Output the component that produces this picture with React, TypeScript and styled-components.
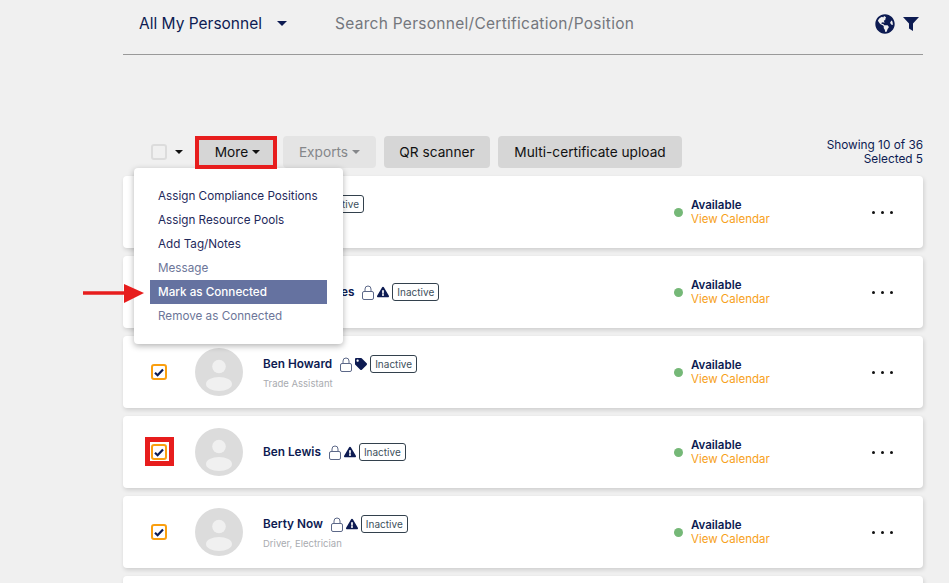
import React from "react";
import styled, { createGlobalStyle } from "styled-components";
import { FaExclamationTriangle, FaGlobeAmericas, FaTag } from "react-icons/fa";

const navy = "#0d1b52";

const GlobalStyle = createGlobalStyle`
  html, body {
    margin: 0;
    height: 583px;
    overflow: hidden;
    background: #f0f0f0;
    font-family: Inter, "Noto Sans", "Liberation Sans", sans-serif;
  }
  * { box-sizing: border-box; }
`;

const Page = styled.div`
  position: relative;
  width: 949px;
  height: 583px;
  overflow: hidden;
  padding: 0 26px 0 123px;
`;

const Header = styled.div`
  display: flex;
  align-items: center;
  height: 55px;
  padding: 0 4px 7px 16px;
  border-bottom: 1px solid #999;
`;

const ScopeLabel = styled.span`
  font-size: 15.5px;
  color: ${navy};
`;

const Caret = styled.span<{ $size?: number; $color?: string; $ml?: number }>`
  display: inline-block;
  width: 0;
  height: 0;
  margin-left: ${(p) => p.$ml ?? 4}px;
  border-left: ${(p) => p.$size ?? 4}px solid transparent;
  border-right: ${(p) => p.$size ?? 4}px solid transparent;
  border-top: ${(p) => p.$size ?? 4}px solid ${(p) => p.$color ?? "#111"};
`;

const SearchText = styled.span`
  margin-left: 48px;
  flex: 1;
  font-size: 15.5px;
  letter-spacing: 0.28px;
  color: #74777d;
`;

const HeaderIcons = styled.div`
  display: flex;
  align-items: center;
  gap: 8px;
  color: ${navy};
`;

const Toolbar = styled.div`
  display: flex;
  align-items: center;
  margin-top: 81px;
  height: 32px;
  padding-left: 28px;
`;

const SelectAll = styled.span`
  width: 16px;
  height: 16px;
  border: 2px solid #dcdcdc;
  border-radius: 3px;
`;

const ToolButton = styled.div<{ $disabled?: boolean; $w: number }>`
  display: flex;
  align-items: center;
  justify-content: center;
  width: ${(p) => p.$w}px;
  height: 32px;
  margin-right: 8px;
  border-radius: 4px;
  font-size: 13.7px;
  background: ${(p) => (p.$disabled ? "#e4e4e4" : "#d6d6d6")};
  color: ${(p) => (p.$disabled ? "#85878a" : "#111")};
`;

const MoreButton = styled(ToolButton)`
  margin-left: 14px;
  padding-left: 3px;
`;

const Counts = styled.div`
  margin-left: auto;
  align-self: flex-start;
  text-align: right;
  font-size: 11.8px;
  line-height: 14px;
  margin-top: 2px;
  color: ${navy};
`;

const List = styled.div`
  display: flex;
  flex-direction: column;
  gap: 8px;
  margin-top: 8px;
`;

const Card = styled.div`
  display: flex;
  align-items: center;
  flex: none;
  height: 72px;
  background: #fff;
  border-radius: 4px;
  box-shadow: 1px 2px 4px rgba(0, 0, 0, 0.14);
  padding-left: 28px;
`;

const Check = styled.span`
  display: flex;
  align-items: center;
  justify-content: center;
  width: 16px;
  height: 16px;
  border: 2px solid #fa9f0f;
  border-radius: 3px;
  background: #fff;
`;

const Avatar = styled.svg`
  width: 48px;
  height: 48px;
  margin-left: 28px;
  flex: none;
`;

const Info = styled.div`
  width: 411px;
  margin-left: 20px;
`;

const NameRow = styled.div`
  display: flex;
  align-items: center;
  gap: 3px;
`;

const Name = styled.span`
  font-size: 11.8px;
  font-weight: 600;
  color: ${navy};
  margin-right: 5px;
`;

const Tag = styled.span`
  height: 18px;
  line-height: 16px;
  padding: 0 4px;
  font-size: 10px;
  color: #40505c;
  border: 1px solid #33414d;
  border-radius: 3px;
`;

const Role = styled.div`
  margin-top: 5px;
  font-size: 9.5px;
  color: #a9abb0;
`;

const Dot = styled.span`
  width: 9px;
  height: 9px;
  border-radius: 50%;
  background: #75b877;
  flex: none;
`;

const Status = styled.div`
  margin-left: 8px;
  width: 181px;
  font-size: 11.5px;
  line-height: 14px;
`;

const Available = styled.div`
  font-weight: 600;
  color: ${navy};
`;

const CalendarLink = styled.div`
  color: #f7a11a;
`;

const Dots = styled.div`
  display: flex;
  gap: 6px;
`;

const DotMark = styled.span`
  width: 3px;
  height: 3px;
  border-radius: 50%;
  background: #111;
`;

const Menu = styled.div`
  position: absolute;
  left: 134px;
  top: 168px;
  width: 209px;
  padding: 16px;
  background: #fff;
  border-radius: 4px;
  box-shadow: 0 2px 6px rgba(0, 0, 0, 0.3);
`;

const MenuItem = styled.div<{ $muted?: boolean; $active?: boolean }>`
  height: 24px;
  line-height: 24px;
  padding-left: 8px;
  font-size: 11.7px;
  white-space: nowrap;
  font-weight: ${(p) => (p.$active ? 500 : 400)};
  background: ${(p) => (p.$active ? "#6572a0" : "transparent")};
  color: ${(p) => (p.$active ? "#fff" : p.$muted ? "#6d7699" : "#1f2a5c")};
`;

const Highlight = styled.div<{ $x: number; $y: number; $w: number; $h: number; $b: number }>`
  position: absolute;
  left: ${(p) => p.$x}px;
  top: ${(p) => p.$y}px;
  width: ${(p) => p.$w}px;
  height: ${(p) => p.$h}px;
  border: ${(p) => p.$b}px solid #e71d1d;
`;

const ArrowMark = styled.svg`
  position: absolute;
  left: 83px;
  top: 283px;
`;

const Lock = () => (
  <svg width="12" height="15" viewBox="0 0 12 15" fill="none" stroke="#5c6888" strokeWidth="1">
    <rect x="0.500" y="6.500" width="11" height="8" rx="1.500" />
    <path d="M3 6.500V4a3 3 0 0 1 6 0v2.500" />
  </svg>
);

const Tick = () => (
  <svg width="10" height="9" viewBox="0 0 10 9" fill="none" stroke={navy} strokeWidth="2.2">
    <path d="M1 4.800 3.600 7.200 9 1.500" />
  </svg>
);

const Funnel = () => (
  <svg width="16" height="14" viewBox="0 0 16 14" fill={navy}>
    <path d="M0 0H16L10 6.500V14L6 11.500V6.500Z" />
  </svg>
);

const Person = () => (
  <Avatar viewBox="0 0 48 48">
    <circle cx="24" cy="24" r="24" fill="#dcdcdc" />
    <circle cx="24" cy="18.500" r="6.800" fill="#f0f0f0" />
    <ellipse cx="24" cy="36" rx="13" ry="7" fill="#f0f0f0" />
  </Avatar>
);

type Row = { name: string; role?: string; icon?: "warn" | "tag" };

const rows: Row[] = [
  // the start of this row sits behind the open menu
  { name: "Ada Lee", role: "Driver, Electrician" },
  { name: "Andrew Charles", icon: "warn" },
  { name: "Ben Howard", role: "Trade Assistant", icon: "tag" },
  { name: "Ben Lewis", icon: "warn" },
  { name: "Berty Now", role: "Driver, Electrician", icon: "warn" },
  { name: "Bob Taylor", role: "Driver", icon: "warn" },
];

const menuItems = [
  { label: "Assign Compliance Positions" },
  { label: "Assign Resource Pools" },
  { label: "Add Tag/Notes" },
  { label: "Message", muted: true },
  { label: "Mark as Connected", active: true },
  { label: "Remove as Connected", muted: true },
];

export default function App() {
  return (
    <Page>
      <GlobalStyle />
      <Header>
        <ScopeLabel>All My Personnel</ScopeLabel>
        <Caret $size={5} $color={navy} $ml={15} />
        <SearchText>Search Personnel/Certification/Position</SearchText>
        <HeaderIcons>
          <FaGlobeAmericas size={20} />
          <Funnel />
        </HeaderIcons>
      </Header>

      <Toolbar>
        <SelectAll />
        <Caret $ml={8} />
        <MoreButton $w={78}>
          More
          <Caret />
        </MoreButton>
        <ToolButton $disabled $w={93}>
          Exports
          <Caret $color="#85878a" />
        </ToolButton>
        <ToolButton $w={106}>QR scanner</ToolButton>
        <ToolButton $w={184}>Multi-certificate upload</ToolButton>
        <Counts>
          Showing 10 of 36
          <br />
          Selected 5
        </Counts>
      </Toolbar>

      <List>
        {rows.map((row) => (
          <Card key={row.name}>
            <Check>
              <Tick />
            </Check>
            <Person />
            <Info>
              <NameRow>
                <Name>{row.name}</Name>
                {row.icon && <Lock />}
                {row.icon === "warn" && <FaExclamationTriangle size={12} color={navy} />}
                {row.icon === "tag" && <FaTag size={12} color={navy} />}
                <Tag>Inactive</Tag>
              </NameRow>
              {row.role && <Role>{row.role}</Role>}
            </Info>
            <Dot />
            <Status>
              <Available>Available</Available>
              <CalendarLink>View Calendar</CalendarLink>
            </Status>
            <Dots>
              <DotMark />
              <DotMark />
              <DotMark />
            </Dots>
          </Card>
        ))}
      </List>

      <Menu>
        {menuItems.map((item) => (
          <MenuItem key={item.label} $muted={item.muted} $active={item.active}>
            {item.label}
          </MenuItem>
        ))}
      </Menu>

      <Highlight $x={195} $y={136} $w={82} $h={33} $b={4} />
      <Highlight $x={145} $y={437} $w={29} $h={29} $b={5} />
      <ArrowMark width="62" height="20" viewBox="0 0 62 20">
        <path d="M0 10H42" stroke="#e71d1d" strokeWidth="3.500" />
        <path d="M41 1 61 10 41 20Z" fill="#e71d1d" />
      </ArrowMark>
    </Page>
  );
}
